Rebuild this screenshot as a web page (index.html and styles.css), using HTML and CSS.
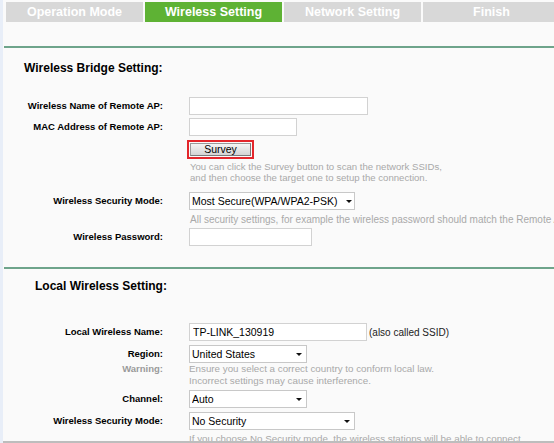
FILE: index.html
```html
<!DOCTYPE html>
<html>
<head>
<meta charset="utf-8">
<title>Quick Setup - Wireless Setting</title>
<link rel="stylesheet" href="styles.css">
</head>
<body>
<div class="page">
  <div class="tabs">
    <div class="tab">Operation Mode</div>
    <div class="tab active">Wireless Setting</div>
    <div class="tab">Network Setting</div>
    <div class="tab">Finish</div>
  </div>
  <div class="rule rule-top"></div>

  <section class="section bridge">
    <h2 class="heading">Wireless Bridge Setting:</h2>
    <div class="row mt22">
      <label class="label">Wireless Name of Remote AP:</label>
      <div class="field"><input class="text w179" type="text"></div>
    </div>
    <div class="row mt3">
      <label class="label">MAC Address of Remote AP:</label>
      <div class="field"><input class="text w108" type="text"></div>
    </div>
    <div class="row mt4">
      <span class="label"></span>
      <div class="field"><span class="survey-box"><button class="survey" type="button">Survey</button></span></div>
    </div>
    <div class="row mt2">
      <span class="label"></span>
      <div class="hint">You can click the Survey button to scan the network SSIDs,<br>and then choose the target one to setup the connection.</div>
    </div>
    <div class="row mt9">
      <label class="label">Wireless Security Mode:</label>
      <div class="field"><span class="select w166"><select><option>Most Secure(WPA/WPA2-PSK)</option></select></span></div>
    </div>
    <div class="row mt4">
      <span class="label"></span>
      <div class="hint hint-wide nowrap">All security settings, for example the wireless password should match the Remote AP.</div>
    </div>
    <div class="row mt3">
      <label class="label">Wireless Password:</label>
      <div class="field"><input class="text w123" type="password"></div>
    </div>
  </section>

  <div class="rule rule-mid"></div>

  <section class="section local">
    <h2 class="heading heading-local">Local Wireless Setting:</h2>
    <div class="row mt30">
      <label class="label">Local Wireless Name:</label>
      <div class="field inline"><input class="text w178" type="text" value="TP-LINK_130919"><span class="note">(also called SSID)</span></div>
    </div>
    <div class="row mt4">
      <label class="label">Region:</label>
      <div class="field"><span class="select w118 arrow7"><select><option>United States</option></select></span></div>
    </div>
    <div class="row row-top">
      <span class="label label-muted">Warning:</span>
      <div class="hint hint-12">Ensure you select a correct country to conform local law.<br>Incorrect settings may cause interference.</div>
    </div>
    <div class="row mt3">
      <label class="label">Channel:</label>
      <div class="field"><span class="select w118 arrow7"><select><option>Auto</option></select></span></div>
    </div>
    <div class="row mt4">
      <label class="label">Wireless Security Mode:</label>
      <div class="field"><span class="select w166 arrow7"><select><option>No Security</option></select></span></div>
    </div>
    <div class="row mt3">
      <span class="label"></span>
      <div class="hint hint-12 nowrap">If you choose No Security mode, the wireless stations will be able to connect</div>
    </div>
  </section>
</div>
</body>
</html>
```

FILE: styles.css
```css
html, body {
  margin: 0;
  padding: 0;
}

body {
  background: #e8eef8;
  font-family: "Liberation Sans", Arial, sans-serif;
  color: #000;
}

.page {
  box-sizing: border-box;
  height: 443px;
  margin-left: 3px;
  background: #fafafa;
  border-bottom: 2px solid #bdbdbd;
  overflow: hidden;
}

.tabs {
  display: flex;
  gap: 2px;
  height: 20px;
  padding: 2px 0 0 3px;
  white-space: nowrap;
}

.tab {
  flex: 0 0 137px;
  height: 20px;
  line-height: 20px;
  background: #d8d8d8;
  color: #fff;
  font-size: 12.5px;
  font-weight: bold;
  text-align: center;
}

.tab.active {
  background: #5eb234;
}

.rule {
  height: 2px;
  margin-left: 1px;
  background: #6ea48b;
}

.rule-top {
  margin-top: 24px;
}

.rule-mid {
  margin-top: 21px;
}

.heading {
  margin: 13px 0 0 21px;
  font-size: 12px;
  line-height: 14px;
  font-weight: bold;
}

.heading-local {
  margin: 10px 0 0 32px;
}

.row {
  display: grid;
  grid-template-columns: 160px auto;
  column-gap: 26px;
  align-items: center;
}

.row-top {
  align-items: start;
}

.mt2 { margin-top: 2px; }
.mt3 { margin-top: 3px; }
.mt4 { margin-top: 4px; }
.mt9 { margin-top: 9px; }
.mt22 { margin-top: 22px; }
.mt30 { margin-top: 30px; }

.label {
  font-size: 9.5px;
  line-height: 12px;
  font-weight: bold;
  text-align: right;
  color: #000;
}

.label-muted {
  color: #9a9a9a;
}

.field {
  display: flex;
  align-items: center;
}

.text {
  box-sizing: border-box;
  display: block;
  height: 18px;
  margin: 0;
  padding: 0 3px;
  border: 1px solid #d2d2d2;
  background: #fff;
  font-family: "Liberation Sans", Arial, sans-serif;
  font-size: 10.5px;
  color: #000;
  outline: none;
}

.w108 { width: 108px; }
.w118 { width: 118px; }
.w123 { width: 123px; }
.w166 { width: 166px; }
.w178 { width: 178px; }
.w179 { width: 179px; }

.note {
  margin-left: 2px;
  font-size: 10px;
  color: #222;
}

.select {
  position: relative;
  display: block;
  height: 18px;
}

.select select {
  box-sizing: border-box;
  display: block;
  width: 100%;
  height: 18px;
  margin: 0;
  padding: 0 0 0 2px;
  border: 1px solid #c8c8c8;
  border-radius: 0;
  background: #fff;
  font-family: "Liberation Sans", Arial, sans-serif;
  font-size: 10.5px;
  color: #000;
  appearance: none;
  -webkit-appearance: none;
  outline: none;
}

.select::after {
  content: "";
  position: absolute;
  right: 3px;
  top: 8px;
  border-left: 3px solid transparent;
  border-right: 3px solid transparent;
  border-top: 3px solid #111;
  pointer-events: none;
}

.select.arrow7::after {
  right: 5px;
}

.survey-box {
  display: block;
  margin-left: -2px;
  padding: 1px;
  border: 2px solid #e3262b;
}

.survey {
  box-sizing: border-box;
  display: block;
  width: 61px;
  height: 13px;
  margin: 0;
  padding: 0;
  border: 1px solid #9a9a9a;
  border-bottom-color: #7a7a7a;
  border-right-color: #7a7a7a;
  background: linear-gradient(#f4f4f4, #d4d4d4);
  font-family: "Liberation Sans", Arial, sans-serif;
  font-size: 10.5px;
  line-height: 11px;
  color: #000;
}

.hint {
  font-size: 9.6px;
  line-height: 11px;
  color: #a9a9a9;
  padding-left: 1px;
}

.hint-wide {
  font-size: 10px;
}

.hint-12 {
  font-size: 9.8px;
  line-height: 12px;
  padding-left: 0;
}

.nowrap {
  white-space: nowrap;
}
```
